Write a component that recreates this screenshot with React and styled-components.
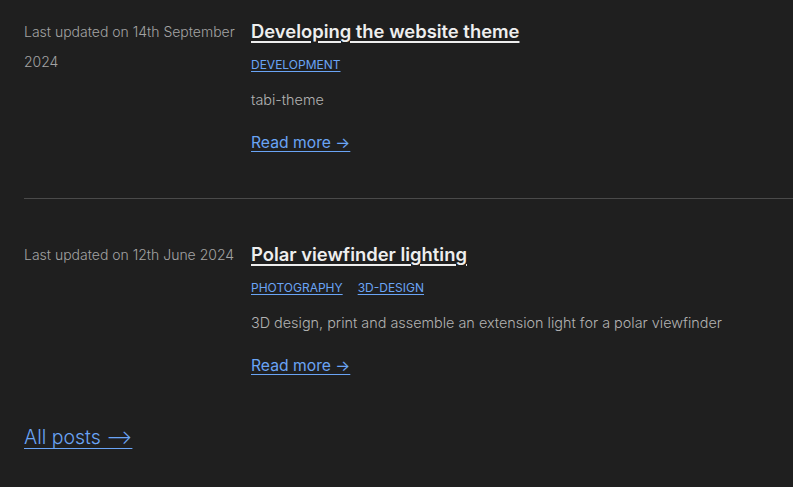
import React from 'react';
import styled, { createGlobalStyle } from 'styled-components';

const GlobalStyle = createGlobalStyle`
  html, body {
    margin: 0;
    background-color: #1f1f1f;
  }
  body {
    font-family: Inter, "Noto Sans", sans-serif;
    -webkit-font-smoothing: antialiased;
  }
`;

const Page = styled.main`
  padding: 17px 0 0 24px;
  overflow: hidden;
`;

const Post = styled.article`
  display: flex;
  gap: 8px;
  padding-bottom: ${(p) => (p.$last ? '0' : '42px')};
  margin-bottom: ${(p) => (p.$last ? '0' : '41px')};
  border-bottom: ${(p) => (p.$last ? 'none' : '1px solid #4a4a4a')};
`;

const Meta = styled.div`
  flex: 0 0 219px;
  color: #a3a3a3;
  font-size: 14px;
  line-height: 30px;
  font-weight: 300;
`;

const Body = styled.div`
  display: flex;
  flex-direction: column;
  align-items: flex-start;
`;

const Title = styled.a`
  color: #eeeeee;
  font-size: 18.4px;
  font-weight: 600;
  line-height: 28px;
  text-decoration: underline;
  text-decoration-thickness: 2px;
  text-underline-offset: 3px;
`;

const Tags = styled.ul`
  display: flex;
  gap: 15px;
  list-style: none;
  margin: 8px 0 0;
  padding: 0;
`;

const Tag = styled.a`
  color: #6aa4f5;
  font-size: 12px;
  line-height: 20px;
  font-weight: 400;
  text-decoration: underline;
  text-underline-offset: 2px;
`;

const Description = styled.p`
  margin: 13px 0 0;
  color: #b2b2b2;
  font-size: 14.4px;
  font-weight: 300;
  line-height: 24px;
`;

const ReadMore = styled.a`
  margin-top: 18px;
  color: #6aa4f5;
  font-size: 15.7px;
  font-weight: 400;
  line-height: 26px;
  text-decoration: underline;
  text-underline-offset: 3px;
`;

const AllPosts = styled.a`
  display: inline-block;
  margin-top: 43px;
  color: #6aa4f5;
  font-size: 19.5px;
  font-weight: 300;
  line-height: 30px;
  text-decoration: underline;
  text-decoration-thickness: 1px;
  text-underline-offset: 4px;
`;

const posts = [
  {
    date: '14th September 2024',
    title: 'Developing the website theme',
    tags: ['development'],
    description: 'tabi-theme',
  },
  {
    date: '12th June 2024',
    title: 'Polar viewfinder lighting',
    tags: ['photography', '3d-design'],
    description: '3D design, print and assemble an extension light for a polar viewfinder',
  },
];

export default function App() {
  return (
    <>
      <GlobalStyle />
      <Page>
        {posts.map((post, i) => (
          <Post key={post.title} $last={i === posts.length - 1}>
            <Meta>{`Last updated on ${post.date}`}</Meta>
            <Body>
              <Title href="#">{post.title}</Title>
              <Tags>
                {post.tags.map((tag) => (
                  <li key={tag}>
                    <Tag href="#">{tag.toUpperCase()}</Tag>
                  </li>
                ))}
              </Tags>
              <Description>{post.description}</Description>
              <ReadMore href="#">Read more →</ReadMore>
            </Body>
          </Post>
        ))}
        <AllPosts href="#">All posts ⟶</AllPosts>
      </Page>
    </>
  );
}
